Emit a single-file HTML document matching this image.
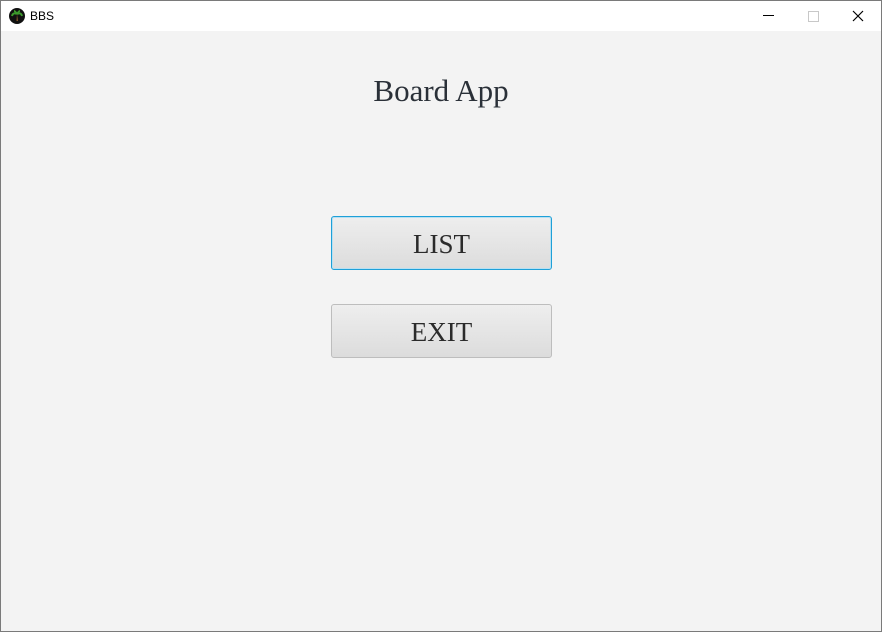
<!DOCTYPE html>
<html><head><style>
html,body{margin:0;padding:0;}
body{width:880px;height:630px;border:1px solid #7a7a7a;background:#f3f3f3;position:relative;overflow:hidden;font-family:"Liberation Serif",serif;}
.tb{position:absolute;left:0;top:0;width:880px;height:30px;background:#fff;}
.tt{position:absolute;left:29px;top:8px;font:12px "Liberation Sans",sans-serif;color:#000;}
.h{position:absolute;left:0;width:880px;top:72px;text-align:center;font-size:31px;color:#2a3038;}
.b{position:absolute;left:330px;width:219px;height:52px;border:1px solid #bdbdbd;border-radius:3px;background:linear-gradient(#eeeeee,#dcdcdc);text-align:center;line-height:54px;font-size:27px;color:#2b2b2b;}
.f{border:1px solid #1ea0d8;box-shadow:inset 0 0 0 1px #b8e0f2;}
</style></head><body>
<div class="tb">
<svg style="position:absolute;left:8px;top:7px" width="16" height="16" viewBox="0 0 16 16"><circle cx="8" cy="8" r="8" fill="#111"/><path d="M8 6 L7.5 13 L9 13 Z" fill="#8a5a2b"/><path d="M8 6 Q4 4 3 8 M8 6 Q12 4 13 8 M8 6 Q6 3 5 3 M8 6 Q10 3 11 3" stroke="#3c9a2c" stroke-width="2" fill="none"/></svg>
<div class="tt">BBS</div>
<div style="position:absolute;left:762px;top:14px;width:11px;height:1px;background:#000"></div>
<div style="position:absolute;left:807px;top:10px;width:9px;height:9px;border:1px solid #c8c8c8"></div>
<svg style="position:absolute;left:851px;top:9px" width="12" height="12"><path d="M1 1L11 11M11 1L1 11" stroke="#000" stroke-width="1.2"/></svg>
</div>
<div class="h">Board App</div>
<div class="b f" style="top:215px">LIST</div>
<div class="b" style="top:303px">EXIT</div>
</body></html>
